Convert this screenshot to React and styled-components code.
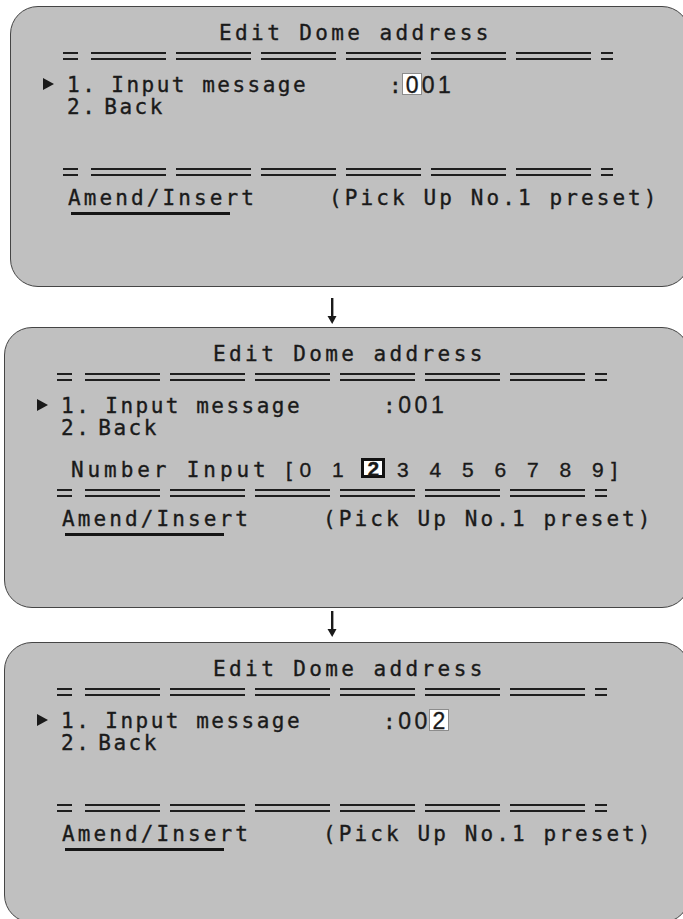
import styled, { createGlobalStyle } from "styled-components";

const GlobalStyle = createGlobalStyle`
  html, body {
    margin: 0;
    padding: 0;
    background: #ffffff;
  }
  body {
    overflow: hidden;
  }
`

const Page = styled.div`
    width: 683px;
    height: 919px;
    overflow: hidden;
    padding-top: 6px;
    box-sizing: border-box;
    font-family: "DejaVu Sans Mono", "Liberation Mono", monospace;
    font-size: 21px;
    color: #1a1a1a;
    -webkit-text-stroke: 0.35px #1a1a1a;
`

const Panel = styled.div`
    box-sizing: border-box;
    margin-left: ${p => p.$left}px;
    width: ${p => 690 - p.$left}px;
    height: 281px;
    background: #c0c0c0;
    border: 1.5px solid #454545;
    border-radius: 28px;
    padding-top: 15px;
`

const Title = styled.div`
    height: 22px;
    line-height: 22px;
    padding-left: 208px;
    letter-spacing: 3.4px;
    white-space: pre;
`

const DividerRow = styled.div`
    display: flex;
    gap: 10px;
    height: 8px;
    margin-top: ${p => p.$top}px;
    padding-left: 52px;
`

const Bar = styled.div`
    box-sizing: border-box;
    width: ${p => p.$w}px;
    height: 8px;
    border-top: 2px solid #1e1e1e;
    border-bottom: 2px solid #1e1e1e;
    margin-right: ${p => p.$after || 0}px;
`

const MenuRow = styled.div`
    display: flex;
    align-items: center;
    height: 22px;
    line-height: 22px;
    padding-left: 32px;
    margin-top: ${p => p.$top || 0}px;
    letter-spacing: 2.5px;
    white-space: pre;
`

const Marker = styled.span`
    width: 0;
    height: 0;
    border-left: 11px solid ${p => p.$show ? "#1a1a1a" : "transparent"};
    border-top: 6.5px solid transparent;
    border-bottom: 6.5px solid transparent;
    margin-right: 13px;
    margin-top: -2px;
`

const Label = styled.span`
    display: inline-block;
    width: 322px;
`

const Word = styled.span`
    margin-left: ${p => p.$gap}px;
`

const Value = styled.span`
    font-family: "Liberation Sans", Arial, sans-serif;
    font-size: 23px;
    letter-spacing: 3.6px;
`

const CursorBox = styled.span`
    display: inline-block;
    box-sizing: border-box;
    width: 20px;
    height: 22px;
    line-height: 22px;
    text-align: center;
    background: #ffffff;
    border: 1px solid #8c8c8c;
    letter-spacing: 0;
    margin-left: -2px;
    margin-right: -0.5px;
`

const NumberRow = styled.div`
    height: 22px;
    line-height: 22px;
    margin-top: 19.5px;
    padding-left: 66px;
    letter-spacing: 3.9px;
    white-space: pre;
    visibility: ${p => p.$show ? "visible" : "hidden"};
`

const DigitList = styled.span`
    font-family: "Liberation Sans", Arial, sans-serif;
    letter-spacing: 7.5px;
`

const Picked = styled.span`
    display: inline-block;
    box-sizing: border-box;
    width: 24px;
    height: 20px;
    line-height: 15px;
    text-align: center;
    border: 3px solid #111111;
    background: #ffffff;
    font-weight: bold;
    letter-spacing: 0;
    margin: 0 -1.8px 0 -3px;
    vertical-align: 1px;
`

const FooterRow = styled.div`
    display: flex;
    height: 22px;
    line-height: 22px;
    margin-top: 10.5px;
    padding-left: 57px;
    letter-spacing: 3.1px;
    white-space: pre;
`

const Amend = styled.span`
    display: inline-block;
    width: 261px;
`

const Underline = styled.div`
    width: 159px;
    height: 3px;
    margin: 3px 0 0 60px;
    background: #151515;
`

const Connector = styled.div`
    height: ${p => p.$h}px;
    box-sizing: border-box;
    padding-top: ${p => p.$top}px;
    padding-left: 326px;
`

const DownArrow = () => (
    <svg width="12" height="26" viewBox="0 0 12 26">
        <rect x="5" y="0" width="2.4" height="20" fill="#1a1a1a" />
        <polygon points="1.5,18 10.5,18 6.2,26" fill="#1a1a1a" />
    </svg>
)

const Divider = ({ top }) => (
    <DividerRow $top={top}>
        <Bar $w={15} $after={3} />
        {[0, 1, 2, 3, 4, 5].map(i => <Bar key={i} $w={75} />)}
        <Bar $w={12} $after={0} />
    </DividerRow>
)

const Screen = ({ left, value, cursorAt, showNumbers }) => {
    const digits = value.split("").map((d, i) =>
        i === cursorAt ? <CursorBox key={i}>{d}</CursorBox> : d
    )

    return (
        <Panel $left={left}>
            <Title>Edit Dome address</Title>
            <Divider top={8} />
            <MenuRow $top={13.5}>
                <Marker $show />
                <Label>1.<Word $gap={14}>Input message</Word></Label>
                <span>:<Value>{digits}</Value></span>
            </MenuRow>
            <MenuRow>
                <Marker />
                <Label>2.<Word $gap={7}>Back</Word></Label>
            </MenuRow>
            <NumberRow $show={showNumbers}>
                Number Input <DigitList>[0 1 <Picked>2</Picked> 3 4 5 6 7 8 9]</DigitList>
            </NumberRow>
            <Divider top={9} />
            <FooterRow>
                <Amend>Amend/Insert</Amend>
                <span>(Pick Up No.1 preset)</span>
            </FooterRow>
            <Underline />
        </Panel>
    )
}

export default function App() {
    return (
        <Page>
            <GlobalStyle />
            <Screen left={10} value="001" cursorAt={0} />
            <Connector $h={40} $top={11}><DownArrow /></Connector>
            <Screen left={4} value="001" cursorAt={-1} showNumbers />
            <Connector $h={34} $top={3}><DownArrow /></Connector>
            <Screen left={4} value="002" cursorAt={2} />
        </Page>
    )
}
